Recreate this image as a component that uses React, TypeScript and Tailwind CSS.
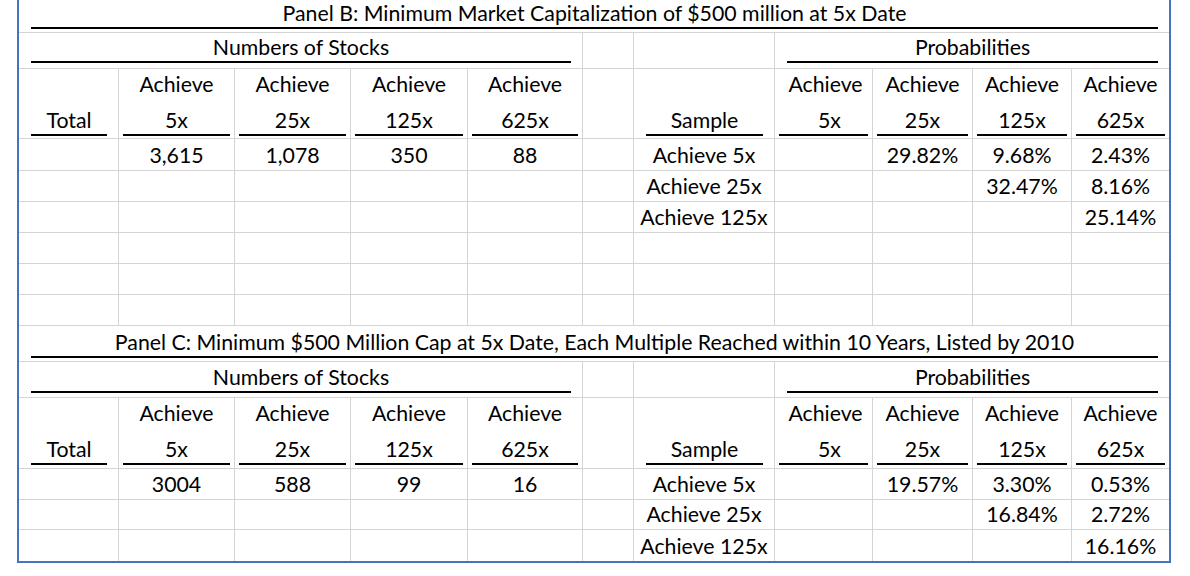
import { ReactNode } from "react";

// grid column widths (each includes its 1px right gridline)
const cols =
  "grid-cols-[100px_116px_116px_117px_115px_51px_141px_98px_100px_99px_97px]";
const rows =
  "grid-rows-[33px_36px_70px_32px_31px_31px_31px_31px_31px_36px_36px_71px_31px_30px_31px]";

const grid = "border-[#d4d4d4]";

interface CellProps {
  children?: ReactNode;
  span?: string;
  lastCol?: boolean;
  lastRow?: boolean;
}

function DataCell({ children, span = "", lastCol, lastRow }: CellProps) {
  return (
    <div
      className={`flex items-end justify-center pb-[3px] leading-[24px] ${grid} ${span} ${
        lastCol ? "" : "border-r"
      } ${lastRow ? "" : "border-b"}`}
    >
      {children}
    </div>
  );
}

// cell whose text sits on an accounting style underline
function LineCell({
  children,
  span = "",
  lastCol,
  wide,
  mb,
  top,
}: CellProps & { wide?: boolean; mb: string; top?: string }) {
  return (
    <div
      className={`flex flex-col items-center justify-end border-b ${grid} ${span} ${
        lastCol ? "" : "border-r"
      }`}
    >
      {top && <div className="leading-[24px] mb-[12px]">{top}</div>}
      <div
        className={`self-stretch border-b-2 border-black pb-[2px] text-center leading-[24px] whitespace-nowrap ${mb} ${
          wide ? "ml-[12px] mr-[11px]" : "mx-[4px]"
        }`}
      >
        {children}
      </div>
    </div>
  );
}

function HeaderRow({ mb }: { mb: string }) {
  return (
    <>
      <LineCell wide mb={mb}>Total</LineCell>
      <LineCell mb={mb} top="Achieve">5x</LineCell>
      <LineCell mb={mb} top="Achieve">25x</LineCell>
      <LineCell mb={mb} top="Achieve">125x</LineCell>
      <LineCell mb={mb} top="Achieve">625x</LineCell>
      <DataCell />
      <LineCell wide mb={mb}>Sample</LineCell>
      <div className={`flex flex-col items-center justify-end border-r border-b ${grid}`}>
        <div className="leading-[24px] mb-[12px] pl-[4px]">Achieve</div>
        <div className={`self-stretch border-b-2 border-black pb-[2px] text-left pl-[39px] leading-[24px] ${mb} mx-[4px]`}>
          5x
        </div>
      </div>
      <LineCell mb={mb} top="Achieve">25x</LineCell>
      <LineCell mb={mb} top="Achieve">125x</LineCell>
      <LineCell mb={mb} top="Achieve" lastCol>625x</LineCell>
    </>
  );
}

function SubtitleRow({ mb }: { mb: string }) {
  return (
    <>
      <LineCell span="col-span-5" wide mb={mb}>Numbers of Stocks</LineCell>
      <DataCell />
      <DataCell />
      <LineCell span="col-span-4" wide mb={mb} lastCol>Probabilities</LineCell>
    </>
  );
}

type Row = string[];

const panelB: Row[] = [
  ["", "3,615", "1,078", "350", "88", "", "Achieve 5x", "", "29.82%", "9.68%", "2.43%"],
  ["", "", "", "", "", "", "Achieve 25x", "", "", "32.47%", "8.16%"],
  ["", "", "", "", "", "", "Achieve 125x", "", "", "", "25.14%"],
  ["", "", "", "", "", "", "", "", "", "", ""],
  ["", "", "", "", "", "", "", "", "", "", ""],
  ["", "", "", "", "", "", "", "", "", "", ""],
];

const panelC: Row[] = [
  ["", "3004", "588", "99", "16", "", "Achieve 5x", "", "19.57%", "3.30%", "0.53%"],
  ["", "", "", "", "", "", "Achieve 25x", "", "", "16.84%", "2.72%"],
  ["", "", "", "", "", "", "Achieve 125x", "", "", "", "16.16%"],
];

function DataRows({ data, endsTable }: { data: Row[]; endsTable?: boolean }) {
  return (
    <>
      {data.map((r, i) =>
        r.map((v, j) => (
          <DataCell
            key={`${i}-${j}`}
            lastCol={j === 10}
            lastRow={endsTable && i === data.length - 1}
          >
            {v}
          </DataCell>
        ))
      )}
    </>
  );
}

export default function App() {
  return (
    <div className="w-[1190px] h-[576px] bg-white overflow-hidden text-black text-[21.3px] font-[Lato,sans-serif]">
      <div className="ml-[17px] w-[1154px] border-l-2 border-r-2 border-b-2 border-[#4472c4]">
        <div className={`grid ${cols} ${rows}`}>
          {/* Panel B */}
          <LineCell span="col-span-11" wide mb="mb-[3px]" lastCol>
            Panel B: Minimum Market Capitalization of $500 million at 5x Date
          </LineCell>
          <SubtitleRow mb="mb-[5px]" />
          <HeaderRow mb="mb-[2px]" />
          <DataRows data={panelB} />

          {/* Panel C */}
          <LineCell span="col-span-11" wide mb="mb-[3px]" lastCol>
            Panel C: Minimum $500 Million Cap at 5x Date, Each Multiple Reached within 10 Years, Listed by 2010
          </LineCell>
          <SubtitleRow mb="mb-[4px]" />
          <HeaderRow mb="mb-[3px]" />
          <DataRows data={panelC} endsTable />
        </div>
      </div>
    </div>
  );
}
